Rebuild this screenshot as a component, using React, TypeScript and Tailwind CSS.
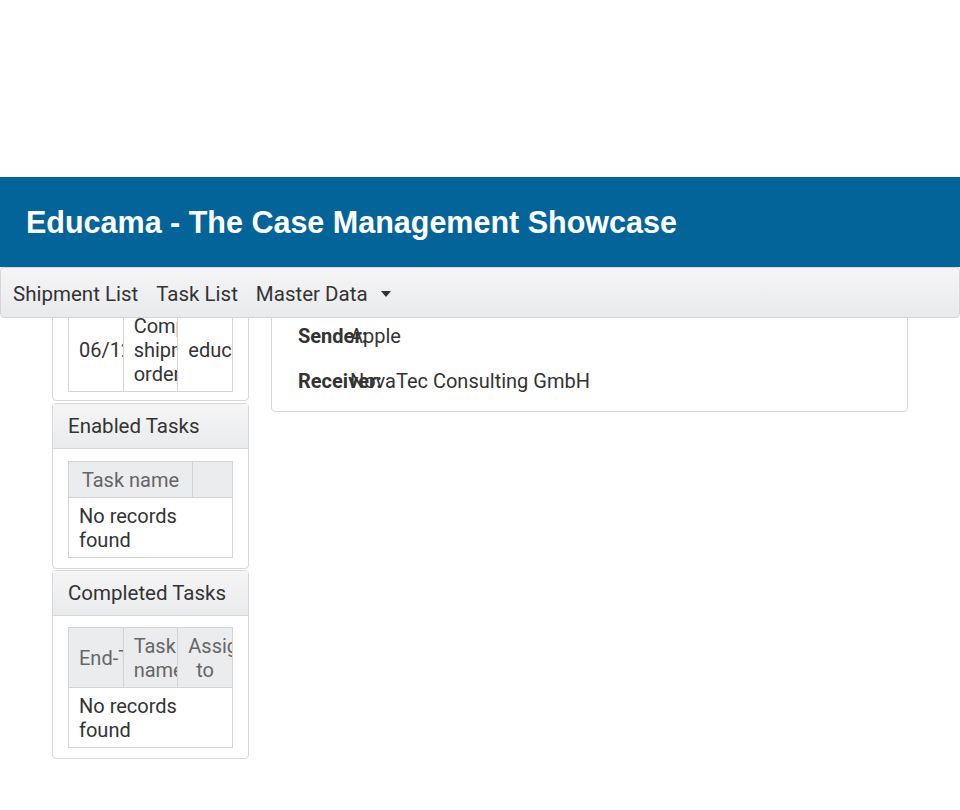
// Educama showcase: header, nav bar, side panels and shipment detail card

const body = { fontFamily: 'Roboto, "Liberation Sans", sans-serif' };

type PanelProps = {
  title?: string;
  className?: string;
  children: React.ReactNode;
};

function Panel({ title, className = '', children }: PanelProps) {
  return (
    <div className={`rounded-[4px] border border-[#d8d8d8] bg-white ${className}`}>
      {title ? (
        <div className="flex h-[45px] items-center border-b border-[#d8d8d8] bg-gradient-to-b from-[#f5f5f6] to-[#eaebed] px-[15px] text-[20.5px] text-[#333]">
          {title}
        </div>
      ) : null}
      {children}
    </div>
  );
}

const th =
  'border border-[#d4d4d4] bg-[#ebecee] px-[10px] py-[5.5px] text-center align-middle font-normal text-[#666] overflow-hidden';
const td = 'border border-[#d4d4d4] px-[10px] py-[5.5px] align-middle overflow-hidden';

function EmptyRow({ span }: { span: number }) {
  return (
    <tr>
      <td colSpan={span} className={`${td} text-left`}>
        No records found
      </td>
    </tr>
  );
}

export default function App() {
  return (
    <div className="min-h-[810px] bg-white text-[20px] leading-6 text-[#333]" style={body}>
      <div className="h-[177px]" />

      <header className="flex h-[90px] items-center bg-[#03649a] px-[26px]">
        <h1
          className="text-[30.5px] font-bold text-white"
          style={{ fontFamily: '"Liberation Sans", Arial, sans-serif' }}
        >
          Educama - The Case Management Showcase
        </h1>
      </header>

      <nav className="relative z-10 flex h-[51px] items-center gap-[18px] rounded-[4px] border border-[#d6d6d6] bg-gradient-to-b from-[#f5f5f6] to-[#e9eaec] px-[12px] pt-[2px] text-[20.5px] text-[#333]">
        <span>Shipment List</span>
        <span>Task List</span>
        <span className="flex items-center gap-[13px]">
          Master Data
          <span className="h-0 w-0 border-x-[5px] border-t-[6px] border-x-transparent border-t-[#333]" />
        </span>
      </nav>

      <main className="flex items-start gap-[22px] px-[52px]">
        <div className="-mt-[29px] flex w-[197px] shrink-0 flex-col">
          <Panel className="px-[15px] pb-[8px] pt-[17px]">
            <table className="w-full table-fixed border-collapse">
              <tbody>
                <tr>
                  <td className={`${td} whitespace-nowrap`}>06/12/2017</td>
                  <td className={td}>Complete shipment order</td>
                  <td className={`${td} whitespace-nowrap`}>educama</td>
                </tr>
              </tbody>
            </table>
          </Panel>

          <Panel title="Enabled Tasks" className="mt-[2px]">
            <div className="px-[15px] pb-[10px] pt-[12px]">
              <table className="w-full table-fixed border-collapse">
                <colgroup>
                  <col className="w-[124px]" />
                  <col />
                </colgroup>
                <thead>
                  <tr>
                    <th className={th}>Task name</th>
                    <th className={th} />
                  </tr>
                </thead>
                <tbody>
                  <EmptyRow span={2} />
                </tbody>
              </table>
            </div>
          </Panel>

          <Panel title="Completed Tasks" className="mt-[1px]">
            <div className="px-[15px] pb-[10px] pt-[11px]">
              <table className="w-full table-fixed border-collapse">
                <thead>
                  <tr>
                    <th className={`${th} whitespace-nowrap`}>End-Time</th>
                    <th className={th}>Task name</th>
                    <th className={th}>Assigned to</th>
                  </tr>
                </thead>
                <tbody>
                  <EmptyRow span={3} />
                </tbody>
              </table>
            </div>
          </Panel>
        </div>

        <div className="-mt-[10px] w-[638px] rounded-[4px] border border-[#d8d8d8] bg-white px-[26px] pb-[8px] pt-[4px]">
          <div className="flex py-[10.5px]">
            <span className="w-[52px] shrink-0 whitespace-nowrap font-bold">Sender:</span>
            <span>Apple</span>
          </div>
          <div className="flex py-[10.5px]">
            <span className="w-[52px] shrink-0 whitespace-nowrap font-bold">Receiver:</span>
            <span>NovaTec Consulting GmbH</span>
          </div>
        </div>
      </main>
    </div>
  );
}
